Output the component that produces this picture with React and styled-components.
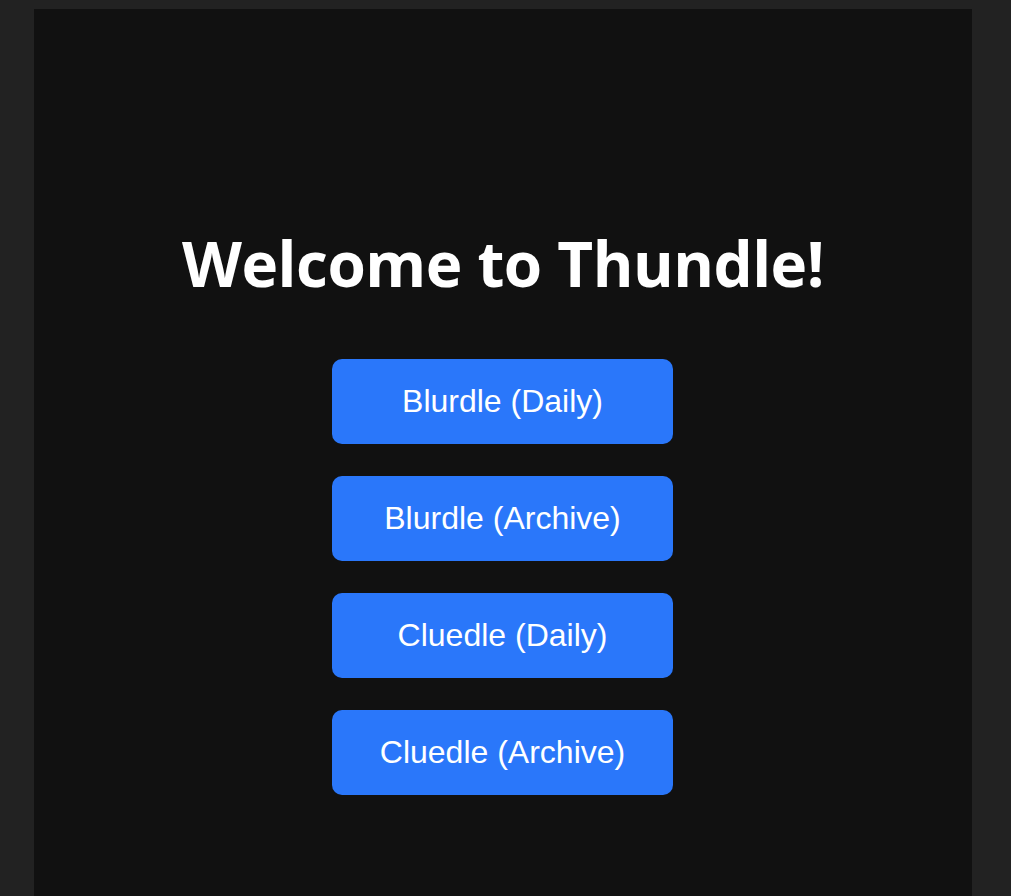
import React from "react";
import styled, { createGlobalStyle } from "styled-components";

const Global = createGlobalStyle`
  html, body { margin: 0; padding: 0; background: #222222; }
  body { height: 896px; overflow: hidden; }
`;

const Panel = styled.main`
  box-sizing: border-box;
  width: 938px;
  height: 887px;
  margin: 9px 0 0 34px;
  background: #111111;
  display: flex;
  flex-direction: column;
  align-items: center;
  padding-top: 214px;
`;

const Title = styled.h1`
  margin: 0 0 56px;
  font-family: "Open Sans", "Noto Sans", sans-serif;
  font-weight: 700;
  font-size: 62px;
  line-height: 80px;
  color: #ffffff;
  letter-spacing: -0.5px;
`;

const Menu = styled.nav`
  display: flex;
  flex-direction: column;
  gap: 32px;
  margin-right: 1px;
`;

const GameButton = styled.button`
  width: 341px;
  height: 85px;
  border: none;
  border-radius: 10px;
  background: #2a77fa;
  color: #ffffff;
  font-family: "Liberation Sans", Arial, sans-serif;
  font-size: 32px;
  cursor: pointer;
  padding: 0;
`;

const games = [
  "Blurdle (Daily)",
  "Blurdle (Archive)",
  "Cluedle (Daily)",
  "Cluedle (Archive)",
];

export default function App() {
  return (
    <>
      <Global />
      <Panel>
        <Title>Welcome to Thundle!</Title>
        <Menu>
          {games.map((g) => (
            <GameButton key={g}>{g}</GameButton>
          ))}
        </Menu>
      </Panel>
    </>
  );
}
